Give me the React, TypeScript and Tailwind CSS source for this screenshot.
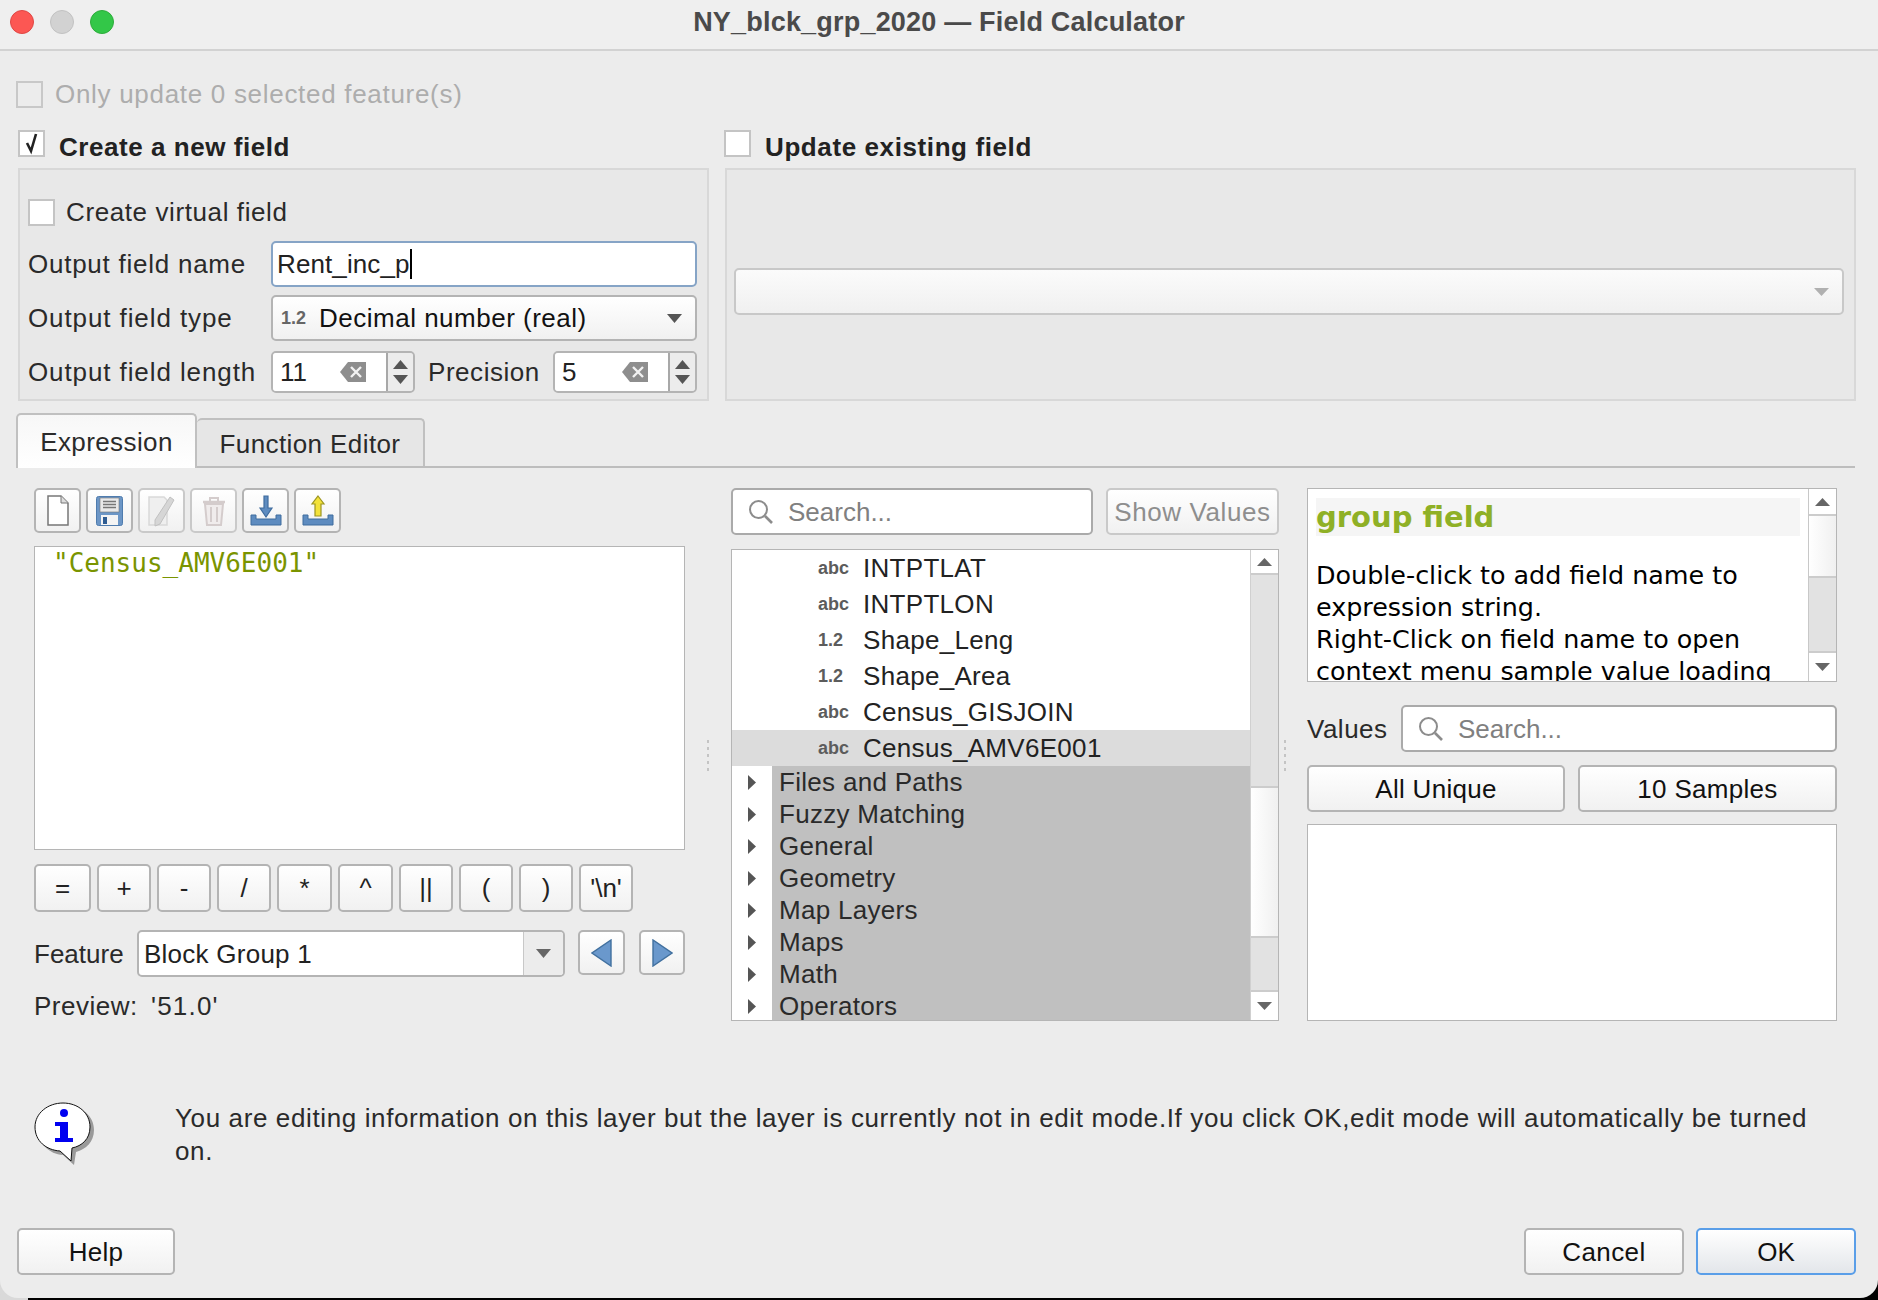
import type { ReactNode } from "react";

const fields = [
  { kind: "abc", name: "INTPTLAT" },
  { kind: "abc", name: "INTPTLON" },
  { kind: "1.2", name: "Shape_Leng" },
  { kind: "1.2", name: "Shape_Area" },
  { kind: "abc", name: "Census_GISJOIN" },
  { kind: "abc", name: "Census_AMV6E001" },
];

const groups = ["Files and Paths", "Fuzzy Matching", "General", "Geometry", "Map Layers", "Maps", "Math", "Operators"];

const operators = [
  { label: "=", w: "w-[57px]" },
  { label: "+", w: "w-[54px]" },
  { label: "-", w: "w-[54px]" },
  { label: "/", w: "w-[54px]" },
  { label: "*", w: "w-[55px]" },
  { label: "^", w: "w-[55px]" },
  { label: "||", w: "w-[54px]" },
  { label: "(", w: "w-[54px]" },
  { label: ")", w: "w-[54px]" },
  { label: "'\\n'", w: "w-[54px]" },
];

function Check({ checked, disabled }: { checked?: boolean; disabled?: boolean }) {
  return (
    <div
      className={
        "w-[27px] h-[27px] shrink-0 border-2 flex items-center justify-center " +
        (disabled ? "border-[#c8c8c8] bg-[#ececec]" : "border-[#c4c4c4] bg-white")
      }
    >
      {checked && (
        <svg width="20" height="22" viewBox="0 0 20 22">
          <path d="M5 10l4 8 5-17" fill="none" stroke="#222" strokeWidth="2.6" />
        </svg>
      )}
    </div>
  );
}

function Btn({ className, children, disabled }: { className?: string; children?: ReactNode; disabled?: boolean }) {
  return (
    <div
      className={
        "flex items-center justify-center shrink-0 rounded-[5px] border-2 bg-linear-to-b from-white to-[#f1f1f1] " +
        (disabled ? "border-[#c9c9c9] " : "border-[#b4b4b4] ") +
        (className ?? "")
      }
    >
      {children}
    </div>
  );
}

function Tri({ up, color = "#666", w = 16, h = 9 }: { up?: boolean; color?: string; w?: number; h?: number }) {
  return (
    <svg width={w} height={h} viewBox="0 0 16 9" preserveAspectRatio="none">
      <path d={up ? "M8 0L16 9H0z" : "M0 0H16L8 9z"} fill={color} />
    </svg>
  );
}

function ClearIcon() {
  return (
    <svg width="26" height="20" viewBox="0 0 26 20">
      <path d="M8 0H26V20H8L0 10z" fill="#8e8e8e" />
      <path d="M11 5l10 10M21 5L11 15" stroke="#f2f2f2" strokeWidth="2.4" />
    </svg>
  );
}

function Spin({ value, className }: { value: string; className: string }) {
  return (
    <div className={"h-[42px] flex rounded-[5px] border-2 border-[#b4b4b4] overflow-hidden " + className}>
      <div className="flex-1 bg-white flex items-center pl-[7px] pr-[20px] justify-between">
        <span className="text-[#222]">{value}</span>
        <ClearIcon />
      </div>
      <div className="w-[27px] border-l-2 border-[#a8a8a8] flex flex-col items-center justify-center gap-[6px] bg-[#ececec]">
        <Tri up color="#555" w={15} h={9} />
        <Tri color="#555" w={15} h={9} />
      </div>
    </div>
  );
}

function SearchIcon() {
  return (
    <svg width="26" height="26" viewBox="0 0 26 26" className="shrink-0">
      <circle cx="10.5" cy="10.5" r="8.5" fill="none" stroke="#8c8c8c" strokeWidth="2" />
      <path d="M17 17l7 7" stroke="#8c8c8c" strokeWidth="2.6" />
    </svg>
  );
}

function SearchBox({ className }: { className: string }) {
  return (
    <div className={"h-[47px] bg-white rounded-[5px] border-2 border-[#aaa] flex items-center pl-[15px] gap-[14px] " + className}>
      <SearchIcon />
      <span className="text-[#808080]">Search...</span>
    </div>
  );
}

function NewIcon() {
  return (
    <svg width="22" height="31" viewBox="0 0 22 31">
      <path d="M1 1H14L21 8V30H1z" fill="#fff" stroke="#777" strokeWidth="1.5" />
      <path d="M14 1V8H21" fill="#ddd" stroke="#777" strokeWidth="1" />
    </svg>
  );
}

function SaveIcon() {
  return (
    <svg width="27" height="30" viewBox="0 0 27 30">
      <rect x="0.5" y="0.5" width="26" height="29" rx="2" fill="#6c96c6" stroke="#4f7cae" />
      <rect x="4" y="2" width="19" height="14" fill="#e9e9e9" stroke="#777" strokeWidth="0.6" />
      <path d="M7 5.5H20M7 8.5H20M7 11.5H20" stroke="#777" strokeWidth="1.4" />
      <rect x="5" y="19" width="17" height="10" fill="#f4f4f4" />
      <rect x="7" y="21" width="4" height="7" fill="#2f5c92" />
    </svg>
  );
}

function EditIcon() {
  return (
    <svg width="28" height="32" viewBox="0 0 28 32">
      <path d="M1 2H16L19 5V30H1z" fill="#efefef" stroke="#d9d9d9" strokeWidth="1.5" />
      <path d="M22 2l4 3L12 29l-5 2 0-6z" fill="#d6d6d6" stroke="#c0c0c0" />
    </svg>
  );
}

function TrashIcon() {
  return (
    <svg width="24" height="30" viewBox="0 0 24 30">
      <path d="M1 6H23" stroke="#d4cccc" strokeWidth="2.5" />
      <path d="M8 5V2H16V5" fill="none" stroke="#d4cccc" strokeWidth="2" />
      <path d="M3 8H21L19 29H5z" fill="#f0ecec" stroke="#d4cccc" strokeWidth="2" />
      <path d="M9 11V26M15 11V26" stroke="#d4cccc" strokeWidth="2" />
    </svg>
  );
}

function TransferIcon({ up }: { up?: boolean }) {
  return (
    <svg width="32" height="31" viewBox="0 0 32 31">
      <path d="M1 20H6V24H26V20H31V30H1z" fill="#5e8cc0" stroke="#3f6c9e" />
      {up ? (
        <path d="M16 1L22 9H19V21H13V9H10z" fill="#f3e23a" stroke="#9c9420" strokeWidth="1.2" />
      ) : (
        <path d="M14 1H18V13H22L16 22L10 13H14z" fill="#5e8cc0" stroke="#3f6c9e" strokeWidth="1.2" />
      )}
    </svg>
  );
}

function NavIcon({ left }: { left?: boolean }) {
  return (
    <svg width="22" height="28" viewBox="0 0 22 28">
      <path d={left ? "M20 1V27L1 14z" : "M2 1V27L21 14z"} fill="#6a98cc" stroke="#41709f" strokeWidth="1.4" />
    </svg>
  );
}

function InfoIcon() {
  return (
    <svg width="63" height="63" viewBox="0 0 63 63" className="shrink-0">
      <path d="M33 4C48 4 60 14 60 28 60 40 52 47 42 50L40 63 29 53C15 52 5 42 5 28 5 14 18 4 33 4z" fill="#9a9a9a" />
      <path d="M29 1C44 1 56 11 56 25 56 37 48 44 38 46L37 59 26 49C12 48 1 39 1 25 1 11 14 1 29 1z" fill="#fff" stroke="#111" strokeWidth="1" />
      <circle cx="30" cy="11" r="4" fill="#0000f0" />
      <path d="M21 20H34V36H39V40H21V36H26V24H21z" fill="#0000f0" />
    </svg>
  );
}

function Splitter() {
  return (
    <div className="flex flex-col gap-[4px]">
      {[0, 1, 2, 3, 4].map((d) => (
        <div key={d} className="w-[2px] h-[3px] bg-[#c4c4c4]" />
      ))}
    </div>
  );
}

export default function App() {
  return (
    <div className="w-[1878px] h-[1300px] bg-linear-to-r from-[#d9d9d9] from-[28px] to-black to-[28px] overflow-hidden [font-family:'Liberation_Sans',Arial,sans-serif] text-[26px] leading-none text-[#2a2a2a]">
      <div className="h-[1298px] bg-[#ececec] rounded-b-[18px] overflow-hidden">
        {/* title bar */}
        <div className="h-[51px] pb-[5px] bg-[#efefef] border-b-2 border-[#d2d2d2] grid grid-cols-[1fr_auto_1fr] items-center">
          <div className="flex items-center gap-[16px] pl-[10px]">
            <div className="w-[24px] h-[24px] rounded-full bg-[#fc5753] border border-[#df4744]" />
            <div className="w-[24px] h-[24px] rounded-full bg-[#d2d2d2] border border-[#c2c2c2]" />
            <div className="w-[24px] h-[24px] rounded-full bg-[#33c748] border border-[#2dac3b]" />
          </div>
          <div className="text-[27px] font-bold text-[#4a4a4a] tracking-[0.2px]">NY_blck_grp_2020 — Field Calculator</div>
          <div />
        </div>

        {/* only update */}
        <div className="mt-[29px] ml-[16px] h-[28px] flex items-center gap-[12px]">
          <Check disabled />
          <span className="text-[#adadad] tracking-[0.7px]">Only update 0 selected feature(s)</span>
        </div>

        {/* create / update */}
        <div className="mt-[22px] ml-[18px] flex gap-[16px]">
          <div className="w-[691px]">
            <div className="h-[27px] flex items-center gap-[14px]">
              <Check checked />
              <span className="font-bold text-[#222] tracking-[0.55px] pt-[6px]">Create a new field</span>
            </div>
            <div className="mt-[11px] h-[233px] bg-[#e8e8e8] border-2 border-[#d8d8d8] pl-[8px] pr-[10px] pt-[28px]">
              <div className="h-[28px] flex items-center gap-[11px]">
                <Check />
                <span className="tracking-[0.6px]">Create virtual field</span>
              </div>
              <div className="mt-[15px] h-[46px] flex items-center">
                <span className="w-[243px] tracking-[0.75px]">Output field name</span>
                <div className="w-[426px] h-[46px] bg-white rounded-[5px] border-2 border-[#86a4c6] flex items-center pl-[4px]">
                  <span className="text-[#222] tracking-[0.1px]">Rent_inc_p</span>
                  <div className="w-[2px] h-[30px] bg-black" />
                </div>
              </div>
              <div className="mt-[8px] h-[46px] flex items-center">
                <span className="w-[243px] tracking-[0.9px]">Output field type</span>
                <Btn className="w-[426px] h-[46px] !justify-start pl-[8px] pr-[13px] gap-[13px]">
                  <span className="text-[18px] font-bold text-[#666]">1.2</span>
                  <span className="flex-1 text-[#111] tracking-[0.5px]">Decimal number (real)</span>
                  <Tri color="#555" w={15} h={9} />
                </Btn>
              </div>
              <div className="mt-[10px] h-[42px] flex items-center">
                <span className="w-[243px] tracking-[0.9px]">Output field length</span>
                <Spin value="11" className="w-[144px]" />
                <span className="ml-[13px] w-[125px] tracking-[0.55px]">Precision</span>
                <Spin value="5" className="w-[144px]" />
              </div>
            </div>
          </div>
          <div className="w-[1131px]">
            <div className="h-[27px] flex items-center gap-[14px] -ml-[1px]">
              <Check />
              <span className="font-bold text-[#222] tracking-[0.6px] pt-[6px]">Update existing field</span>
            </div>
            <div className="mt-[11px] h-[233px] bg-[#e8e8e8] border-2 border-[#d8d8d8] pl-[7px] pr-[10px] pt-[98px]">
              <div className="h-[47px] rounded-[5px] border-2 border-[#c8c8c8] bg-linear-to-b from-[#fbfbfb] to-[#f0f0f0] flex items-center justify-end pr-[13px]">
                <Tri color="#b0b0b0" w={15} h={8} />
              </div>
            </div>
          </div>
        </div>

        {/* tabs */}
        <div className="mt-[13px] h-[54px] ml-[16px] mr-[23px] flex items-end border-b-2 border-[#bdbdbd]">
          <div className="w-[181px] h-[55px] -mb-[2px] z-10 bg-linear-to-b from-[#f7f7f7] to-white rounded-t-[5px] border-2 border-b-0 border-[#c0c0c0] flex items-center justify-center tracking-[0.4px]">
            Expression
          </div>
          <div className="w-[228px] h-[48px] pt-[2px] bg-[#e6e6e6] rounded-t-[5px] border-2 border-b-0 border-l-0 border-[#c0c0c0] flex items-center justify-center tracking-[0.4px]">
            Function Editor
          </div>
        </div>

        {/* expression builder */}
        <div className="mt-[20px] ml-[34px] flex h-[533px]">
          <div className="w-[651px]">
            <div className="flex gap-[5px]">
              <Btn className="w-[47px] h-[45px]"><NewIcon /></Btn>
              <Btn className="w-[47px] h-[45px]"><SaveIcon /></Btn>
              <Btn disabled className="w-[47px] h-[45px]"><EditIcon /></Btn>
              <Btn disabled className="w-[47px] h-[45px]"><TrashIcon /></Btn>
              <Btn className="w-[47px] h-[45px]"><TransferIcon /></Btn>
              <Btn className="w-[47px] h-[45px]"><TransferIcon up /></Btn>
            </div>
            <div className="mt-[13px] h-[304px] bg-white border border-[#b5b5b5] pl-[18px] pt-[3px]">
              <span className="[font-family:'DejaVu_Sans_Mono',monospace] text-[26px] leading-[26px] text-[#7a9400]">"Census_AMV6E001"</span>
            </div>
            <div className="mt-[14px] flex gap-[6px]">
              {operators.map((op) => (
                <Btn key={op.label} className={op.w + " h-[48px] text-[#222]"}>{op.label}</Btn>
              ))}
            </div>
            <div className="mt-[18px] flex items-start">
              <span className="w-[103px] pt-[11px]">Feature</span>
              <div className="w-[428px] h-[47px] bg-white rounded-[5px] border-2 border-[#b4b4b4] flex items-center overflow-hidden">
                <span className="flex-1 pl-[5px] text-[#222] tracking-[0.25px]">Block Group 1</span>
                <div className="w-[40px] h-full bg-[#ececec] border-l border-[#c8c8c8] flex items-center justify-center">
                  <Tri color="#666" w={15} h={9} />
                </div>
              </div>
              <Btn className="ml-[13px] w-[47px] h-[45px]"><NavIcon left /></Btn>
              <Btn className="ml-[14px] w-[46px] h-[45px]"><NavIcon /></Btn>
            </div>
            <div className="mt-[16px] flex tracking-[0.5px]">
              <span className="w-[117px]">Preview:</span>
              <span className="tracking-[1.2px]">'51.0'</span>
            </div>
          </div>

          <div className="w-[46px] h-[472px] mt-[61px] flex justify-center items-center">
            <div className="mt-[-60px]"><Splitter /></div>
          </div>

          <div className="w-[548px]">
            <div className="flex justify-between">
              <SearchBox className="w-[362px]" />
              <Btn disabled className="w-[173px] h-[47px] text-[#8e8e8e] tracking-[0.6px]">Show Values</Btn>
            </div>
            <div className="mt-[14px] h-[472px] border border-[#b5b5b5] bg-white flex overflow-hidden">
              <div className="flex-1 overflow-hidden">
                {fields.map((f, i) => (
                  <div key={f.name} className={"h-[36px] flex items-center pl-[86px] " + (i === 5 ? "bg-[#dcdcdc]" : "")}>
                    <span className="w-[45px] text-[18px] font-bold text-[#5c5c5c]">{f.kind}</span>
                    <span className="text-[#222] tracking-[0.3px]">{f.name}</span>
                  </div>
                ))}
                {groups.map((g) => (
                  <div key={g} className="h-[32px] flex items-center">
                    <div className="w-[40px] h-full bg-white flex items-center justify-center shrink-0">
                      <svg width="8" height="15" viewBox="0 0 8 15"><path d="M0 0L8 7.5L0 15z" fill="#555" /></svg>
                    </div>
                    <div className="flex-1 h-full bg-[#c0c0c0] flex items-center pl-[7px] text-[#2a2a2a] tracking-[0.3px]">{g}</div>
                  </div>
                ))}
              </div>
              <div className="flex flex-col w-[28px] border-l border-[#d0d0d0]">
                <div className="h-[25px] bg-white border-b-2 border-[#ccc] flex items-center justify-center"><Tri up color="#666" w={15} h={8} /></div>
                <div className="h-[213px] bg-[#e2e2e2] border-b-2 border-[#ccc]" />
                <div className="h-[150px] bg-linear-to-r from-white to-[#f0f0f0] border-b-2 border-[#ccc]" />
                <div className="h-[54px] bg-[#e2e2e2] border-b-2 border-[#ccc]" />
                <div className="flex-1 bg-white flex items-center justify-center"><Tri color="#666" w={15} h={8} /></div>
              </div>
            </div>
          </div>

          <div className="w-[28px] h-[472px] mt-[61px] flex justify-start items-center pl-[5px]">
            <div className="mt-[-60px]"><Splitter /></div>
          </div>

          <div className="w-[530px]">
            <div className="h-[194px] border border-[#b5b5b5] bg-white flex overflow-hidden">
              <div className="flex-1 pl-[8px] pr-[8px] pt-[9px] overflow-hidden [font-family:'DejaVu_Sans',sans-serif] text-black">
                <div className="h-[38px] bg-[#f5f5f5] flex items-center font-bold text-[29px] text-[#8fb026]">group field</div>
                <div className="mt-[23px] text-[25.4px] leading-[32px]">
                  Double-click to add field name to
                  <br />
                  expression string.
                  <br />
                  Right-Click on field name to open
                  <br />
                  context menu sample value loading
                </div>
              </div>
              <div className="flex flex-col w-[28px] border-l border-[#c8c8c8]">
                <div className="h-[27px] bg-white border-b-2 border-[#ccc] flex items-center justify-center"><Tri up color="#666" w={15} h={8} /></div>
                <div className="h-[60px] bg-linear-to-r from-white to-[#f0f0f0]" />
                <div className="h-[77px] bg-[#e2e2e2] border-y-2 border-[#ccc]" />
                <div className="flex-1 bg-white flex items-center justify-center"><Tri color="#666" w={15} h={8} /></div>
              </div>
            </div>
            <div className="mt-[23px] flex items-center justify-between">
              <span className="tracking-[0.5px]">Values</span>
              <SearchBox className="w-[436px]" />
            </div>
            <div className="mt-[13px] flex justify-between">
              <Btn className="w-[258px] h-[47px] text-[#111] tracking-[0.3px]">All Unique</Btn>
              <Btn className="w-[259px] h-[47px] text-[#111] tracking-[0.3px]">10 Samples</Btn>
            </div>
            <div className="mt-[12px] h-[197px] bg-white border border-[#b5b5b5]" />
          </div>
        </div>

        {/* edit mode message */}
        <div className="mt-[81px] ml-[34px] mr-[60px] h-[63px] flex gap-[78px]">
          <InfoIcon />
          <div className="leading-[33px] tracking-[0.62px]">
            You are editing information on this layer but the layer is currently not in edit mode.If you click OK,edit mode will automatically be turned on.
          </div>
        </div>

        {/* dialog buttons */}
        <div className="mt-[63px] ml-[17px] mr-[22px] flex">
          <Btn className="w-[158px] h-[47px] text-[#111] tracking-[0.3px]">Help</Btn>
          <div className="flex-1" />
          <Btn className="w-[160px] h-[47px] text-[#111] tracking-[0.4px]">Cancel</Btn>
          <Btn className="ml-[12px] w-[160px] h-[47px] text-[#111] !border-[#5a9ee8] !to-[#e3e6ea]">OK</Btn>
        </div>
      </div>
    </div>
  );
}
